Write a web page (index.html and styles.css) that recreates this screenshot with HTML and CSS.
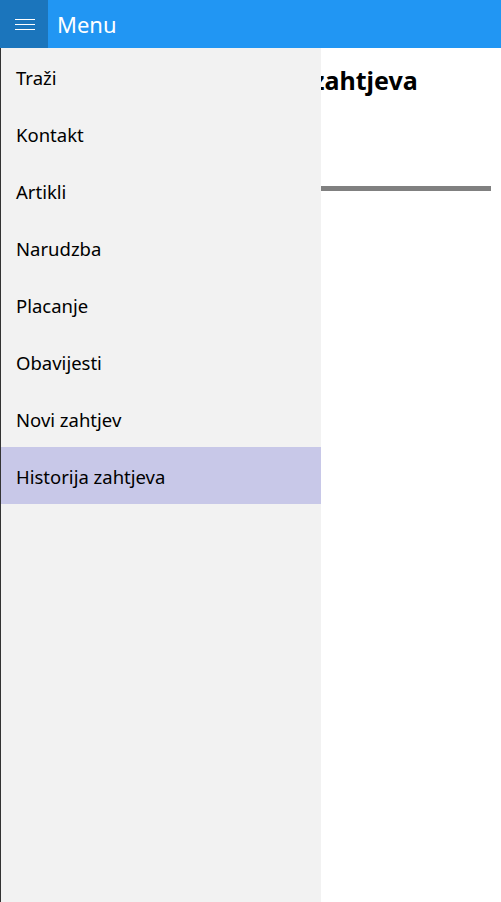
FILE: index.html
```html
<!DOCTYPE html>
<html>
<head>
<meta charset="utf-8">
<link rel="stylesheet" href="styles.css">
</head>
<body>
<div class="app">
  <header class="topbar">
    <div class="burger">
      <svg width="20" height="11" viewBox="0 0 20 11"><rect x="0" y="0" width="20" height="1" fill="#fff"/><rect x="0" y="5" width="20" height="1" fill="#fff"/><rect x="0" y="10" width="20" height="1" fill="#fff"/></svg>
    </div>
    <div class="title">Menu</div>
  </header>
  <div class="body">
    <main class="content">
      <h1 class="heading">Historija zahtjeva</h1>
      <div class="bar"></div>
    </main>
    <nav class="menu">
      <div class="item">Traži</div>
      <div class="item">Kontakt</div>
      <div class="item">Artikli</div>
      <div class="item">Narudzba</div>
      <div class="item">Placanje</div>
      <div class="item">Obavijesti</div>
      <div class="item">Novi zahtjev</div>
      <div class="item selected">Historija zahtjeva</div>
    </nav>
  </div>
</div>
</body>
</html>
```
FILE: styles.css
```css
html, body { margin: 0; padding: 0; }
body { width: 501px; height: 902px; overflow: hidden; background: #fff; font-family: "Noto Sans", "DejaVu Sans", sans-serif; }
.app { display: flex; flex-direction: column; height: 902px; }
.topbar { height: 48px; background: #2196f3; display: flex; align-items: center; flex-shrink: 0; }
.burger { width: 48px; height: 48px; background: #1b75bc; display: flex; align-items: center; justify-content: center; }
.burger svg { display: block; margin-left: 2px; }
.title { color: #fff; font-size: 22px; margin-left: 9px; line-height: 48px; font-weight: 400; }
.body { position: relative; flex: 1; border-left: 1px solid #333; }
.content { padding: 14px 10px 0 0; }
.heading { margin: 0 0 0 198px; font-size: 25px; font-weight: 700; line-height: 36px; color: #000; white-space: nowrap; }
.bar { margin: 88px 0 0 300px; height: 5px; background: #808080; }
.menu { position: absolute; left: 0; top: 0; bottom: 0; width: 320px; background: #f2f2f2; }
.item { height: 57px; line-height: 57px; padding-left: 15px; font-size: 18.5px; color: #000; box-sizing: border-box; padding-top: 1px; }
.item.selected { background: #c8c8e8; }
```
